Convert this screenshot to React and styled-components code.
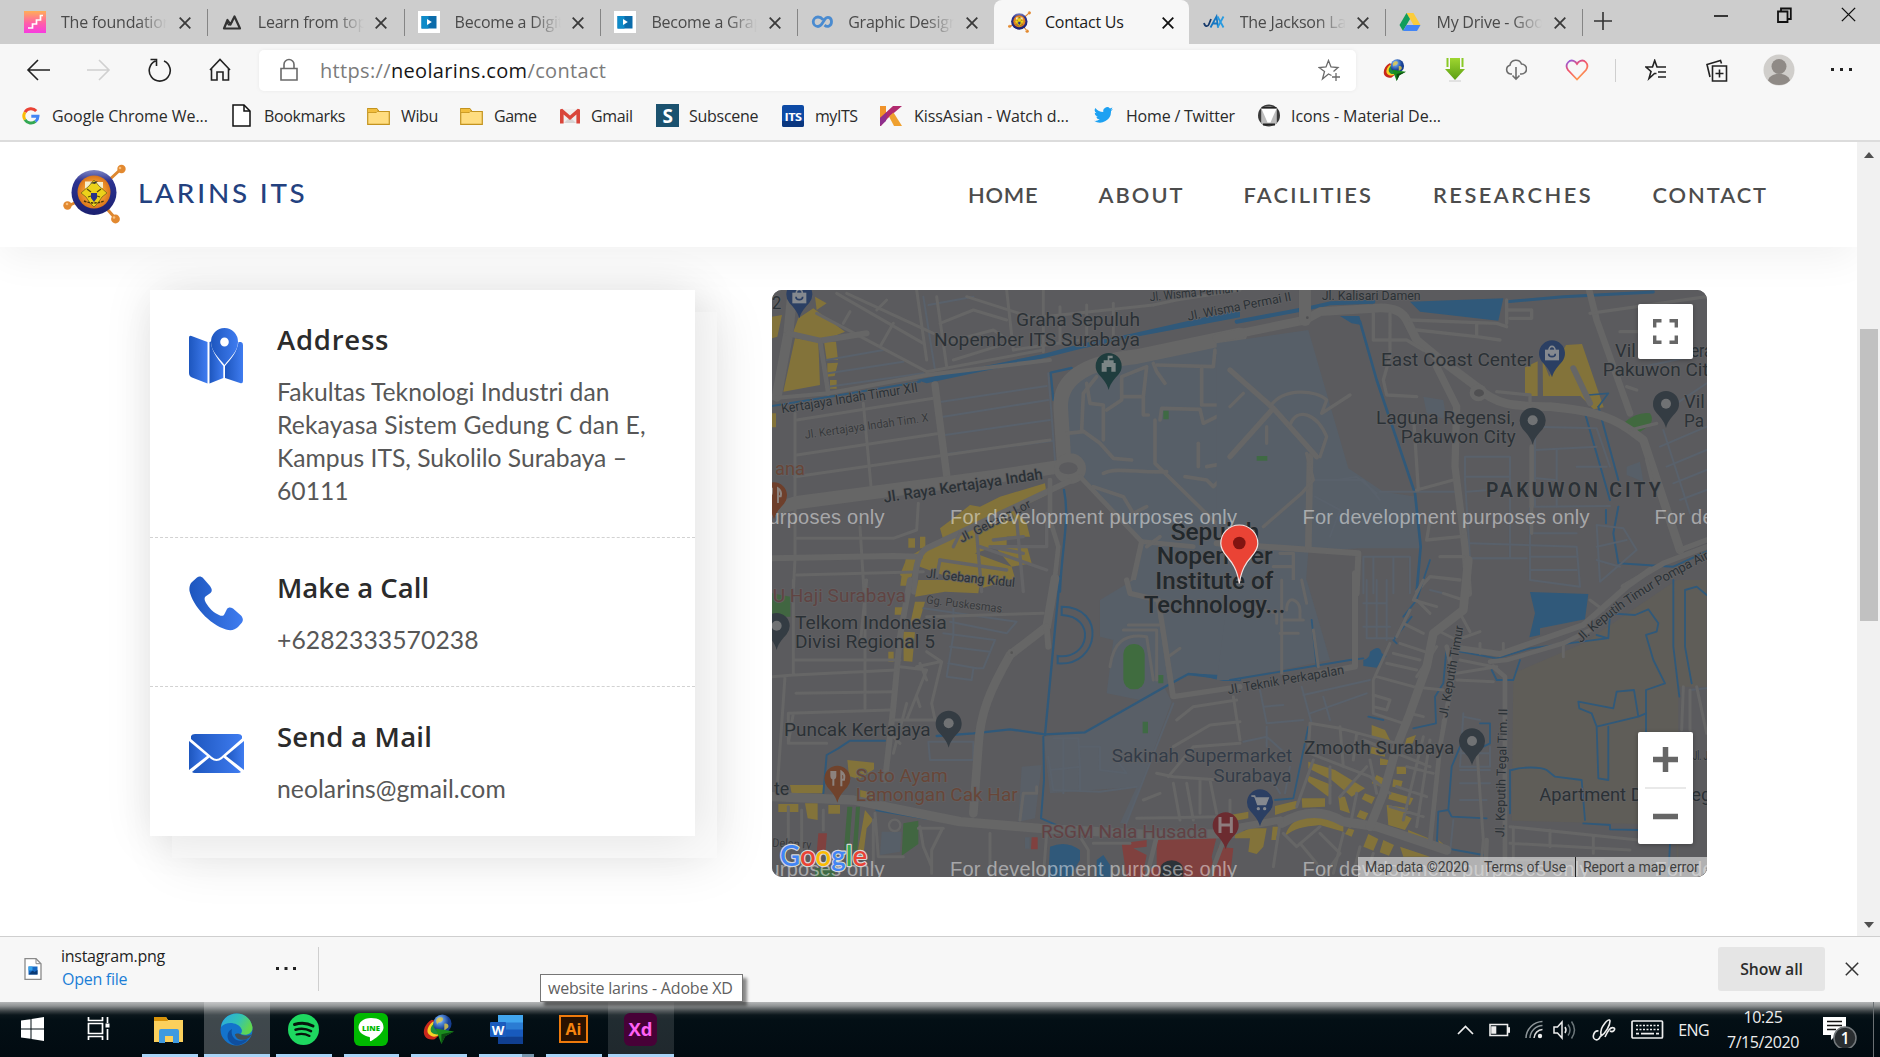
import React from 'react';
import styled, { createGlobalStyle } from 'styled-components';

const GlobalStyle = createGlobalStyle`
  * { box-sizing: border-box; }
  body { margin: 0; overflow: hidden; background: #fff; }
  svg { display: block; }
`;

const UI = '"Open Sans", "Noto Sans", sans-serif';
const SITE = 'Lato, "Open Sans", sans-serif';

/* ---------- window shell ---------- */

const Screen = styled.div`
  width: 1880px;
  height: 1057px;
  display: flex;
  flex-direction: column;
  font-family: ${UI};
  overflow: hidden;
`;

const TabStrip = styled.div`
  height: 44px;
  flex: none;
  display: flex;
  background: #cdcdcd;
  padding-left: 10px;
`;

const Tab = styled.div`
  width: ${(p) => (p.$active ? 194.7 : 196.8)}px;
  flex: none;
  height: 44px;
  display: flex;
  align-items: center;
  padding-left: 14px;
  border-radius: 8px 8px 0 0;
  background: ${(p) => (p.$active ? '#f7f7f7' : 'transparent')};
  position: relative;
  &::after {
    content: '';
    display: ${(p) => (p.$line ? 'block' : 'none')};
    position: absolute;
    right: -1px;
    top: 9px;
    width: 1px;
    height: 27px;
    background: #858585;
  }
`;

const TabIcon = styled.span`
  width: 37px;
  flex: none;
`;

const TabTitle = styled.span`
  width: 106px;
  flex: none;
  overflow: hidden;
  white-space: nowrap;
  font-size: 16px;
  letter-spacing: -0.22px;
  line-height: 24px;
  color: ${(p) => (p.$active ? '#1b1b1b' : '#4a4a4a')};
  mask-image: ${(p) => (p.$active ? 'none' : 'linear-gradient(90deg, #000 72%, transparent 100%)')};
`;

const TabClose = styled.span`
  width: 14px;
  margin-left: 11.5px;
  padding-top: 2px;
`;

const NewTab = styled.span`
  padding: 12px 0 0 12px;
`;

const WindowButtons = styled.div`
  margin-left: auto;
  display: flex;
  align-items: flex-start;
  gap: 49px;
  padding: 7px 24px 0 0;
`;

const Toolbar = styled.div`
  height: 51px;
  flex: none;
  display: flex;
  align-items: center;
  background: #f7f7f7;
  padding: 1px 0 0 26px;
`;

const NavButtons = styled.div`
  width: 233px;
  display: flex;
  align-items: center;
  gap: 36.5px;
`;

const AddressBar = styled.div`
  width: 1097px;
  height: 41px;
  flex: none;
  display: flex;
  align-items: center;
  background: #fff;
  border-radius: 5px;
  box-shadow: 0 0 4px rgba(0, 0, 0, 0.06);
  padding: 0 15px 0 20px;
`;

const Url = styled.span`
  margin-left: 21px;
  flex: 1;
  font-size: 20px;
  letter-spacing: 0.34px;
  line-height: 30px;
  padding-top: 1px;
  color: #7b7b7b;
  b { font-weight: 400; color: #161616; }
`;

const Extensions = styled.div`
  display: flex;
  align-items: center;
  margin-left: 27px;
`;

const Slot = styled.span`
  width: ${(p) => p.$w}px;
`;

const Rule = styled.span`
  width: 1px;
  height: 23px;
  margin-right: 29px;
  background: #cfcfcf;
`;

const Bookmarks = styled.div`
  height: 47px;
  flex: none;
  display: flex;
  align-items: flex-start;
  background: #f7f7f7;
  border-bottom: 2px solid #dcdcdc;
  padding: 8px 0 0 22px;
`;

const Bookmark = styled.div`
  width: ${(p) => p.$w}px;
  height: 25px;
  display: flex;
  align-items: center;
  white-space: nowrap;
  font-size: 16px;
  letter-spacing: ${(p) => p.$ls}px;
  color: #2a2a2a;
`;

const BookmarkIcon = styled.span`
  width: ${(p) => p.$w}px;
  flex: none;
`;

/* ---------- site ---------- */

const Viewport = styled.div`
  height: 794px;
  flex: none;
  display: flex;
  background: #fff;
`;

const Page = styled.div`
  flex: 1;
  display: flex;
  flex-direction: column;
  overflow: hidden;
  font-family: ${SITE};
`;

const SiteHeader = styled.header`
  height: 105px;
  flex: none;
  display: flex;
  align-items: center;
  padding: 0 84px 2px 63px;
  background: #fff;
  box-shadow: 0 10px 42px rgba(0, 0, 0, 0.06);
`;

const Brand = styled.div`
  display: flex;
  align-items: center;
  gap: 12px;
  font-size: 27.8px;
  font-weight: 500;
  line-height: 40px;
  letter-spacing: 2.8px;
  color: #23417f;
`;

const BrandName = styled.span`
  padding-bottom: 2px;
`;

const SiteNav = styled.nav`
  margin-left: auto;
  display: flex;
`;

const NavLink = styled.a`
  width: ${(p) => p.$w}px;
  font-size: 21.8px;
  font-weight: 600;
  line-height: 40px;
  padding-top: 2px;
  letter-spacing: ${(p) => p.$ls}px;
  color: #4c4c4c;
`;

const Content = styled.main`
  flex: 1;
  display: flex;
  gap: 77px;
  padding: 43px 0 0 150px;
`;

const Card = styled.section`
  width: 545px;
  height: 546px;
  flex: none;
  background: #fff;
  box-shadow: 0 0 44px rgba(0, 0, 0, 0.1), 22px 22px 0 #fafafa, 22px 22px 50px rgba(0, 0, 0, 0.11);
`;

const InfoRow = styled.div`
  height: ${(p) => p.$h}px;
  display: flex;
  padding: 30px 30px 0 39px;
  border-bottom: ${(p) => (p.$last ? 'none' : '1px dashed #d2d2d2')};
`;

const InfoIcon = styled.span`
  width: 88px;
  flex: none;
  padding-top: ${(p) => p.$top}px;
`;

const InfoTitle = styled.h3`
  margin: 0 0 15px;
  font: 600 27.5px/40px ${UI};
  letter-spacing: ${(p) => p.$ls}px;
  color: #2b2b2b;
`;

const InfoText = styled.p`
  margin: 0;
  font-size: 24.7px;
  line-height: 33px;
  letter-spacing: ${(p) => p.$ls || 0}px;
  color: #575757;
  white-space: nowrap;
`;

const MapBox = styled.section`
  width: 935px;
  height: 587px;
  flex: none;
  position: relative;
  border-radius: 10px;
  overflow: hidden;
  background: #5d5d5f;
`;

const MapControl = styled.div`
  position: absolute;
  right: 14px;
  top: ${(p) => p.$top}px;
  width: 55px;
  display: flex;
  flex-direction: column;
  align-items: center;
  background: #fff;
  border-radius: 2px;
  box-shadow: 0 1px 4px rgba(0, 0, 0, 0.3);
`;

const ControlCell = styled.span`
  height: 55px;
  display: flex;
  align-items: center;
`;

const ControlLine = styled.i`
  width: 41px;
  height: 2px;
  background: #e9e9e9;
`;

const Attribution = styled.div`
  position: absolute;
  right: 0;
  bottom: 0;
  height: 20px;
  display: flex;
  font: 14px/20px Roboto, sans-serif;
  color: #404040;
  background: rgba(226, 226, 226, 0.64);
  white-space: nowrap;
`;

const Credit = styled.span`
  width: ${(p) => p.$w}px;
  padding-left: 7px;
  letter-spacing: -0.06px;
  border-left: ${(p) => (p.$line ? '1px solid #222' : 'none')};
`;

const Scrollbar = styled.div`
  width: 23px;
  background: #f1f1f1;
  display: flex;
  flex-direction: column;
  align-items: center;
  justify-content: space-between;
  padding: 10px 0 8px;
`;

const Thumb = styled.div`
  width: 18px;
  height: 292px;
  margin-bottom: 130px;
  background: #c1c1c1;
`;

/* ---------- download shelf ---------- */

const Shelf = styled.div`
  height: 66px;
  flex: none;
  display: flex;
  align-items: center;
  background: #f7f7f7;
  border-top: 1px solid #cfcfcf;
  padding: 0 21px 2px 24px;
`;

const Download = styled.div`
  width: 295px;
  height: 44px;
  display: flex;
  align-items: center;
  border-right: 1px solid #cfcfcf;
`;

const FileText = styled.div`
  margin-left: 19px;
  width: 215px;
  font-size: 16px;
  line-height: 23px;
  letter-spacing: -0.28px;
  color: #1f1f1f;
  padding-bottom: 2px;
  a { display: block; color: #1b7ed6; padding-left: 1px; }
`;

const ShowAll = styled.button`
  margin: 0 20px 0 auto;
  width: 107px;
  height: 44px;
  border: 0;
  border-radius: 3px;
  background: #e5e5e5;
  font: 600 15.8px ${UI};
  letter-spacing: -0.1px;
  color: #2c2c2c;
`;

/* ---------- taskbar ---------- */

const Taskbar = styled.footer`
  height: 55px;
  flex: none;
  display: flex;
  position: relative;
  background: linear-gradient(180deg, #b4b6b7 0, #8f9293 4px, #3c4346 9px, #0b161b 13px, #030f15 18px, #020b11 100%);
  padding-left: 4px;
`;

const TaskButton = styled.div`
  width: ${(p) => p.$w}px;
  height: 55px;
  display: flex;
  justify-content: center;
  align-items: center;
  padding-bottom: 1px;
  position: relative;
  background: ${(p) => (p.$hot ? `rgba(255,255,255,${p.$hot})` : 'transparent')};
  &::after {
    content: '';
    position: absolute;
    bottom: 0;
    height: 3px;
    left: ${(p) => (p.$hot ? 0 : 6)}px;
    right: ${(p) => (p.$hot ? 0 : 6)}px;
    background: ${(p) => (p.$open === 'two' ? 'linear-gradient(90deg, #a9d4f7 78%, #7695ac 78%)' : p.$open ? '#a9d4f7' : 'transparent')};
  }
`;

const Tip = styled.div`
  position: absolute;
  left: 540px;
  top: -28px;
  width: 203px;
  height: 28px;
  background: #fff;
  border: 1px solid #767676;
  box-shadow: 4px 4px 3px rgba(0, 0, 0, 0.45);
  font-size: 16px;
  line-height: 26px;
  letter-spacing: -0.19px;
  text-indent: 7px;
  white-space: nowrap;
  color: #5f5f5f;
`;

const Tray = styled.div`
  margin-left: auto;
  display: flex;
  align-items: center;
  color: #eee;
  font-size: 16px;
  letter-spacing: -0.6px;
`;

const TrayIcon = styled.span`
  width: ${(p) => p.$w}px;
`;

const Clock = styled.div`
  width: 74px;
  margin: 0 23px 0 17px;
  text-align: center;
  line-height: 25px;
  letter-spacing: -0.4px;
`;

const ShowDesktop = styled.i`
  align-self: stretch;
  width: 7px;
  margin-left: 16px;
  border-left: 1px solid #6a7073;
`;

/* ---------- glyphs ---------- */

const Close = ({ s = 12, c = '#333', w = 1.8 }) => (
  <svg width={s} height={s} viewBox="0 0 12 12" stroke={c} strokeWidth={w} fill="none"><path d="M.7 .7L11.3 11.3M11.3 .7L.7 11.3" /></svg>
);
const Dots = ({ w = 21, s = 3 }) => (
  <svg width={w} height="4" fill="#222"><rect width={s} height={s} x="0" /><rect width={s} height={s} x={(w - s) / 2} /><rect width={s} height={s} x={w - s} /></svg>
);

const Fav = {
  steps: (
    <svg width="22" height="22"><defs><linearGradient id="st" x2="0" y2="1"><stop stopColor="#ffae57" /><stop offset=".55" stopColor="#ff5fa8" /><stop offset="1" stopColor="#f73be0" /></linearGradient></defs>
      <rect width="22" height="22" fill="url(#st)" /><path d="M4 17h4.500v-4h4v-4h4V4.500h2.500" fill="none" stroke="#fff" strokeWidth="1.700" /></svg>
  ),
  peak: <svg width="22" height="22" fill="none" stroke="#333" strokeWidth="2.200"><path d="M3 17.500L6.500 9l3 4.500L13.500 5.500 19 17.500z" strokeLinejoin="round" /><path d="M6 12l2 2 3-3" strokeWidth="1.500" /></svg>,
  play: <svg width="22" height="22"><rect width="22" height="22" fill="#fff" /><rect x="3.500" y="5" width="15" height="12.500" fill="#0b6cab" /><path d="M3.500 5h7v12.500h-7z" fill="#0e8bc9" /><path d="M9 8v6l4.800-3z" fill="#fff" /></svg>,
  loop: <svg width="22" height="22" fill="none" stroke="#4a8bd0" strokeWidth="2.800"><path d="M12 8.700C10.500 6.800 9 6 7 6a4.700 4.700 0 100 9.500c4 0 4.500-4.500 7-7.500 2.500-3 6.500-1.500 6.500 2.700s-4 6-7 3.500" /></svg>,
  jax: <svg width="22" height="22" fill="none" stroke="#1576c2" strokeWidth="1.800"><path d="M1 12c1 4 4 4 5 1L8 8" stroke="#173a6b" /><path d="M7.500 16.500L13.500 5.500l1.500 11M10 12.500h5" /><path d="M14.500 5.500l6 11M20.500 5.500l-6 11" stroke="#2a9be0" /></svg>,
  drive: <svg width="22" height="22"><path d="M7.500 2h7l7 12h-7z" fill="#fbcc3c" /><path d="M7.500 2L.5 14l3.500 6L11 8z" fill="#119d5b" /><path d="M7.500 14h14L18 20H4z" fill="#4385f5" /></svg>,
};

const Emblem = ({ w, h }) => (
  <svg width={w} height={h} viewBox="0 0 63 60">
    <defs>
      <radialGradient id="em"><stop offset=".6" stopColor="#f39a2f" /><stop offset="1" stopColor="#d9741b" /></radialGradient>
      <linearGradient id="er" x2="0" y2="1"><stop stopColor="#7f86c4" /><stop offset=".25" stopColor="#2c3290" /><stop offset="1" stopColor="#1b2070" /></linearGradient>
    </defs>
    <g stroke="#dd8730" strokeWidth="3"><path d="M31 30L58 5M31 30L5 42M31 30L52 54" /></g>
    <circle cx="31" cy="28.500" r="22.500" fill="url(#er)" />
    <circle cx="31" cy="28" r="16.500" fill="url(#em)" />
    <path d="M22 17.500h7v7h-7zM33 18h7v6h-7z" fill="#f7eecb" />
    <path d="M31 16l5 6 8 7-5 4-4 6-4 4-4-4-4-6-5-4 8-7z" fill="#ecd21a" stroke="#7a6a14" strokeWidth=".8" />
    <path d="M27 19l8-2-3 3z" fill="#3a3a30" />
    <path d="M28 29h6v5l-3 4-3-4z" fill="#27318a" />
    <path d="M24 25l4 3M38 25l-4 3M25 33l3-1M37 33l-3-1" stroke="#57490c" strokeWidth="1.300" />
    <path d="M21 37q10 4 20 0" fill="none" stroke="#47360c" strokeWidth="1.500" strokeDasharray="2.500 1" />
    <g fill="#e28930"><circle cx="58.500" cy="5" r="4.200" /><circle cx="4.500" cy="41.500" r="4.200" /><circle cx="52.500" cy="55" r="4.400" /></g>
    <g fill="#f8bf7c"><circle cx="57" cy="4" r="1.300" /><circle cx="4" cy="40" r="1.300" /><circle cx="51" cy="53.500" r="1.300" /></g>
  </svg>
);

const Folder = () => <svg width="23" height="18"><path d="M.7 1.500h9l2 3h10.600v12.800H.7z" fill="#ffdd80" stroke="#c3931f" strokeWidth="1.200" /><path d="M1 5.500h8l3-2.500" fill="none" stroke="#c3931f" /><path d="M1.200 2h8l1.300 2-2 1.300H1.200z" fill="#f2be3c" /></svg>;

const BI = {
  google: <svg width="18" height="18" viewBox="0 0 18 18" fill="none" strokeWidth="3"><path d="M14.200 4A7 7 0 003 5.200" stroke="#ea4335" /><path d="M3 5.200a7 7 0 000 7.600" stroke="#fbbc05" /><path d="M3 12.800a7 7 0 0010.500 1.600" stroke="#34a853" /><path d="M13.500 14.400A7 7 0 0016 9.200H9.300" stroke="#4285f4" /></svg>,
  doc: <svg width="19" height="23" fill="#fff" stroke="#111" strokeWidth="1.500"><path d="M1 1h11l6 6v15H1z" /><path d="M12 1v6h6" fill="none" /></svg>,
  folder: <Folder />,
  gmail: <svg width="20" height="16"><path d="M1 1h18v14H1z" fill="#f0eeee" /><path d="M4 15l6-6 6 6z" fill="#d8d4d4" /><path d="M0 1.500V15.500h3.600V6.500L10 12l6.400-5.500v9H20V1.500L17.800.8 10 7.400 2.200.8z" fill="#d9453a" /></svg>,
  sub: <svg width="23" height="23"><rect width="23" height="23" fill="#1b526f" /><text x="11.500" y="18.500" textAnchor="middle" fontFamily="Open Sans, sans-serif" fontWeight="700" fontSize="19" fill="#fff">S</text></svg>,
  its: <svg width="22" height="22"><rect width="22" height="22" rx="2" fill="#0d4aa5" /><path d="M0 16h22v4a2 2 0 01-2 2H2a2 2 0 01-2-2z" fill="#0a377f" /><text x="11" y="15.500" textLength="17" lengthAdjust="spacingAndGlyphs" textAnchor="middle" fontFamily="Open Sans, sans-serif" fontWeight="700" fontSize="11" fill="#fff">ITS</text></svg>,
  kiss: <svg width="22" height="20"><path d="M0 0h6v8L0 13z" fill="#f0932b" /><path d="M13 0h9L8 12 1 20H0v-8z" fill="#b12a6f" /><path d="M9 10.500l4.500-4L22 20h-8z" fill="#efa02f" /><path d="M0 12l7-6-1 9-6 5z" fill="#8e2f8d" /></svg>,
  bird: <svg width="19" height="17" viewBox="0 3 24 19.500" fill="#1da1f2"><path d="M24 4.600a10 10 0 01-2.800.8 5 5 0 002.100-2.700 10 10 0 01-3.100 1.200 4.900 4.900 0 00-8.400 4.500A14 14 0 011.700 3.200a4.900 4.900 0 001.500 6.600 4.900 4.900 0 01-2.200-.6 4.900 4.900 0 003.900 4.900 5 5 0 01-2.200.1 4.900 4.900 0 004.600 3.400A9.900 9.900 0 010 19.500 14 14 0 0021.500 7.100 10 10 0 0024 4.600z" /></svg>,
  mat: <svg width="22" height="23"><circle cx="11" cy="11.500" r="11" fill="#3a3a3a" /><path d="M3.200 3.800Q11 1 18.800 3.800V19.500Q11 23 3.200 19.500z" fill="#bcbcbc" /><path d="M3.500 3h15v1.800h-15z" fill="#222" /><path d="M3.500 4.800h15L12.500 18.500h-3z" fill="#fff" /><path d="M5 19.500h12v2H5z" fill="#222" /></svg>,
};

const Globe = ({ w, h }) => (
  <svg width={w} height={h} viewBox="0 0 32 31">
    <defs><radialGradient id="gl" cx=".35" cy=".3"><stop stopColor="#e6f3ff" /><stop offset=".4" stopColor="#5a92dd" /><stop offset="1" stopColor="#173f92" /></radialGradient></defs>
    <path d="M9 6C2 10-1 18 2 23c2 3 6 4 10 3l7-6C12 21 8 16 12 7z" fill="#c9281c" />
    <path d="M10 8C5 12 3 18 6 21c3 3 7 3 10 1l2-5c-6 2-8-3-5-9z" fill="#f5d327" />
    <path d="M11 10c-4 4-4 8-1 10s7 1 8 0l1-5z" fill="#1d8f3a" />
    <circle cx="20" cy="10" r="9.500" fill="url(#gl)" />
    <path d="M16 4c4-2 6 1 4 3s-5 1-5 4c-2-3-2-5 1-7zM22 10c3-1 5 1 4 4l-4 3z" fill="#d9c447" opacity=".85" />
    <path d="M13 15l19 3-9 5-4 8z" fill="#1a8d1d" /><path d="M19 31l4-8 9-5-13 3z" fill="#0d4d12" />
  </svg>
);

/* ---------- map ---------- */

const Label = ({ x, y, w, s = 55, r = 0, fill = '#2b3136', weight = 400, children }) => (
  <text x={x} y={y} fontFamily="Roboto, sans-serif" fontSize={s} fontWeight={weight} fill={fill} textLength={w}
    lengthAdjust="spacingAndGlyphs" transform={r ? `rotate(${r} ${x} ${y})` : undefined}
    stroke="#616163" strokeWidth="5" paintOrder="stroke" strokeLinejoin="round">{children}</text>
);
const Pin = ({ x, y, c = '#343c43', children }) => (
  <g transform={`translate(${x} ${y})`}>
    <path d="M0 73C-6 50-20 38-30 26A39 39 0 1130 26C20 38 6 50 0 73z" fill={c} />
    {children || <circle r="15" fill="#707274" />}
  </g>
);
const Bag = () => <g><rect x="-21" y="-10" width="42" height="32" fill="#85898f" /><path d="M-9-9a9 11 0 0118 0" fill="none" stroke="#85898f" strokeWidth="5" /><path d="M-10 2a10 9 0 0020 0" fill="none" stroke="#2b3f63" strokeWidth="5" /></g>;
const Fork = () => <g fill="none" stroke="#8c827d" strokeWidth="6"><path d="M-18-22v14q0 8 6 8t6-8v-14M-12-22v44M12 24V-20q12 8 8 24H12" /></g>;

const R = ({ d, w = 9, c = '#666666' }) => <path d={d} fill="none" stroke={c} strokeWidth={w} strokeLinejoin="round" strokeLinecap="round" />;
const BL = '#59616b';
const WT = '#30597a';
const YL = '#83733a';
const UN = '#575f68';

const MapArt = () => (
  <svg width="935" height="587" viewBox="772 290 935 587">
    <rect x="772" y="290" width="935" height="587" fill="#5b5b5e" />

    <g transform="translate(760 280) scale(.33333)">
      <path d="M925 290L1150 215 1440 160V935H1120L1150 790 970 590 920 500z" fill={UN} />
      <path d="M165 50l35 20-30 20zM160 85l95 70-75 30-80-30 15-40zM105 175l70 10 5 130-110 20zM192 185h36l6 55h-34zM202 250l32-2-10 40-22 2zM210 300h20v26h-20zM36 110l30-5-14 65-16 5zM36 400h12v42h-12z" fill={YL} />
      <path d="M855 610l5 35-95 45 35 40 10 40h-70v25l60 0 15 55-60 10-50-60-60 20 110 40 10 35-100 30-60-20-140-50-15 50-30-20 20-50 50-30 60-25-10-35 40-30 50-40 30 5 60-30z" fill={YL} />
      <path d="M445 775h20v28h-20zM480 770h16v35h-16zM437 835h30l-8 35h-24zM425 885h28l-8 32h-24z" fill={YL} />
      <g>
        {['M200 240L370 210', 'M205 280L430 245', 'M205 320L490 280', 'M545 365L860 318', 'M550 410L865 360', 'M555 465L870 420', 'M560 522L880 482', 'M490 50L525 270', 'M505 75L640 50', 'M865 280L885 540'].map((d) => <R key={d} d={d} w={6} c={BL} />)}
        <R d="M36 378L200 352 480 305" w={6} c={WT} />
        <path d="M470 300L850 222 960 192 1110 162 1440 88V112L1120 172 960 207 850 235 500 310z" fill={WT} />
        <R d="M935 264L872 278 880 360" w={7} c={WT} /><R d="M912 630C930 720 905 800 900 935" w={7} c={WT} />
      </g>
      {['M170 100L500 275 850 210', 'M110 420L520 355', 'M110 525L540 460', 'M105 590L870 480', 'M310 370L335 640', 'M105 400V835L100 935', 'M300 740L312 935', 'M475 670L470 750 400 775 110 775', 'M110 885L490 875', 'M260 40L520 160', 'M230 40L490 190', 'M470 30L500 240', 'M530 50L560 260', 'M400 130L360 200', 'M270 95L250 130', 'M380 60L350 90', 'M540 130L640 90 740 120', 'M550 190L700 150 760 190', 'M620 50L840 120', 'M740 30L760 210', 'M850 30V215', 'M850 110L1180 75', 'M900 80V190', 'M980 75V180', 'M1060 70V165', 'M1180 75L1250 60 1440 30', 'M760 210L960 180', 'M580 240L740 190'].map((d) => <R key={d} d={d} w={9} />)}
      <R d="M36 835L400 828 480 830" w={18} /><R d="M95 60L85 160 50 350" w={30} /><R d="M85 160L180 182 320 160" w={18} /><R d="M180 182L205 340" w={14} /><R d="M36 355L205 340 500 285 870 240" w={12} />
      <R d="M525 315L562 600" w={22} />
      <R d="M36 690L110 668 700 590 900 560" w={40} />
      <R d="M1440 165L1130 230C990 245 900 290 902 380L912 545" w={44} />
      <path d="M930 520a48 46 0 100 92 48 46 0 100-92z" fill="#666" /><ellipse cx="925" cy="565" rx="28" ry="18" fill="#5b5b5e" />
      <R d="M960 590L1145 785 1300 800" w={14} /><R d="M1145 785L1112 935" w={16} /><R d="M925 605L820 655 500 805C470 820 465 880 462 935" w={18} />
      <R d="M870 600V720L895 800 880 935" w={14} />
      {['M650 760L665 935', 'M770 720L790 935', 'M540 840L740 870', 'M540 840L530 890', 'M690 800L790 820', 'M580 800L600 760', 'M860 700V800H700', 'M660 800L860 870', 'M700 780L790 770'].map((d) => <R key={d} d={d} w={10} c="#646466" />)}
      {['M1010 290L970 340 965 450 1020 490 1060 535 1115 540', 'M980 310L990 370 1030 375 1030 480', 'M1040 390L1085 360V290L1160 260 1150 350 1085 350', 'M1150 350V405H1165', 'M1180 250L1190 275 1215 310', 'M1190 255L1360 260 1365 210 1440 285', 'M1325 265L1325 375H1440', 'M1200 420L1205 385 1320 388 1330 430 1410 390', 'M1185 420V550L1440 800', 'M1415 400L1425 545 1340 560', 'M1315 490V560', 'M1275 590L1340 600 1360 620 1440 540', 'M1030 580C1070 560 1140 580 1220 575', 'M1000 620L1090 650 1120 700 1160 680', 'M920 460L970 455', 'M1380 390L1440 340', 'M1200 770L1160 800'].map((d) => <R key={d} d={d} w={11} />)}
      <path d="M1210 392h16v26h-16z" fill="#3f6a44" />
    </g>

    <g transform="translate(1230 280) scale(.33333)">
      <path d="M-40 190L235 150 355 565 460 635 560 650 570 805H385L235 815 225 940H-40z" fill={UN} />
      <path d="M885 262l38-18V348h-38zM938 240l20 50 50-95 48-3 65 190-30 6-40-40-112 0z" fill={YL} />
      <path d="M1180 430q40-35 80-30 20 30-30 55z" fill="#41693f" /><path d="M80 528h32v14h-32z" fill="#3f6a44" />
      <R d="M20 125L220 88 300 70 430 65" w={12} c={WT} />
      <path d="M540 65L820 55 805 122 570 95z" fill={WT} /><R d="M830 65L1000 50 1270 36" w={9} c={WT} />
      <path d="M330 108H388L395 135 365 130z" fill={WT} />
      <R d="M390 125L440 300 555 640 572 800 560 935" w={8} c={WT} /><R d="M1065 400L1140 660" w={6} c={WT} /><R d="M1105 380L1165 600" w={6} c={WT} /><R d="M1075 345L1135 340 1105 380" w={5} c={WT} />
      <R d="M1128 690V730M1165 680L1150 760 1165 850 1330 860 1440 810" w={6} c={WT} />
      {['M705 530H840V835H720L705 600z', 'M705 590H840', 'M710 635L780 630', 'M915 510L1100 500', 'M915 450V680M980 510V680', 'M920 595L975 600', 'M1040 560H1130', 'M915 680L1140 678', 'M700 835H890', 'M720 790L1040 800 1050 920 900 900V680', 'M900 760H1040M900 830H1040M900 870H1040', 'M1290 500L1430 440M1310 560L1430 510M1330 610L1430 570M1350 660L1430 630M1300 450L1380 700', 'M1100 735L1180 745 1220 810 1110 905z', 'M1100 800L1190 780', 'M250 600H400L450 660M320 600L380 590 440 640', 'M255 650L330 690 300 770M450 635H680', 'M400 830V940M430 830V940M490 830V940M540 830V940M400 830H540', 'M1340 370L1430 310M1240 260L1430 220', 'M910 440L1100 445 1140 560', 'M1100 840L1170 860'].map((d) => <R key={d} d={d} w={6} c={BL} />)}
      <path d="M580 350l60 10 10 60-60-20zM1190 560l40-15 10 60-50-20z" fill={UN} />
      <R d="M-40 175L225 120 270 95 430 85C480 80 515 90 530 120L560 180 620 230 740 320C800 380 860 378 960 380 1060 390 1130 400 1200 450L1240 480 1350 810" w={26} />
      <R d="M225 20V120" w={36} /><R d="M620 260L680 380 675 560 705 800 715 940" w={22} /><R d="M1075 20L1100 120 1200 400" w={20} /><R d="M1350 810L1430 780M1180 920L1300 850 1430 800" w={16} /><R d="M-40 790L250 810 385 820 380 940" w={18} /><R d="M240 530L235 800" w={20} /><R d="M0 270L130 385 260 530M130 385L0 530" w={16} /><R d="M905 500V680" w={14} /><R d="M905 760V680" w={10} />
      {['M430 100V180H530L580 210M480 100V230L460 300 470 345 560 350M560 150L740 170 810 180M540 120L800 130 830 140M740 130V170M830 60V130M830 90H905V115H840M800 335L900 345 900 370', 'M0 380L40 340M120 380C160 320 260 330 290 360L275 400 360 345M180 435C200 380 260 400 290 470L270 530M110 440V490M230 520L250 600 215 640 100 740', 'M550 400L565 630M560 630L670 600M600 720L590 780 690 770M630 830H700M560 935L600 890 690 900M150 820H190V935M130 860H190M1250 540L1270 620', 'M1080 100L1430 50M1170 155H1230M1190 320L1220 330M1200 450L1280 430M700 700V760'].map((d) => <R key={d} d={d} w={10} />)}
      <circle cx="745" cy="338" r="26" fill="#666" /><ellipse cx="747" cy="339" rx="15" ry="11" fill="#505052" /><R d="M1030 265L1080 370" w={18} /><circle cx="232" cy="113" r="4" fill="#505052" />
    </g>

    <g transform="translate(760 580) scale(.33333)">
      <path d="M1020 170L1020 60 1120 0H1440V300L1290 280 1240 305 1140 360 1040 340 1060 180z" fill={UN} />
      <path d="M850 470L970 455 1215 325 1235 365 1100 730H1080L1130 620 870 640zM785 560l60-5-20 160-50 10z" fill="#595f67" />
      <path d="M425 0h20l-5 15h-15zM475 0H660l-5 40-100-5-90 15zM405 82h25l-4 22h-22zM465 65h30l-20 70-25 0zM430 155l35 2-8 88-26-2zM385 215h16v30h-16zM262 540l80 8v20l-45 30-30-10zM90 615h100v25H95zM55 672h60v24H55zM135 670h38v50l-30-5zM205 675h35v26h-35zM300 630l45 10v15h-45zM315 690l25 30-20 25-8 65h-18z" fill={YL} />
      <path d="M36 40l55 10V110H36zM262 680h15l-10 130h-15zM288 680h12l-8 130h-14zM430 730l45-8v70l-50 35z" fill="#416641" /><rect x="1090" y="192" width="64" height="136" rx="30" fill="#406c3f" /><path d="M1195 285h15v25h-15zM1148 425h16v35h-16zM165 865h60v25h-60z" fill="#3f6a44" />
      <path d="M175 760h26l-5 60h-26zM815 772h18v36h-20zM1085 790l75-10v20l-40 5 40 20-10 50 -50 20zM1190 780l180-10-15 60 10 60H1100l90-30zM1375 800l45 5-10 85h-50z" fill="#80413f" />
      <path d="M365 755h60l-5 60-60 10zM795 772h14v34h-14z" fill={UN} />
      <path d="M870 800q50-20 90 10v30l-30 50h-65zM1010 840l20-15 20 30v35h-40z" fill={WT} />
      <R d="M900-10L880 200 855 465" w={7} c={WT} /><path d="M905 80C1040 80 1020 260 893 250L893 228C990 240 1010 110 905 105z" fill="none" stroke={WT} strokeWidth="6" />
      <R d="M530 468L640 460 750 448 855 463 975 457 1215 320 1285 282 1440 300" w={7} c={WT} /><path d="M1290 280l90 5 60 18-50 0z" fill={WT} />
      <R d="M375 482H270L235 505 200 525 190 640" w={6} c={WT} /><R d="M850 470L852 600 843 715 900 740" w={6} c={WT} /><R d="M350 690L500 715" w={8} c={WT} />
      {['M490 85L770 125 740 160 570 125', 'M580 85V165L560 290 635 300 640 265H670L705 180 550 160', 'M570 200L690 215M565 250L650 265', 'M505 485H640V540H510z', 'M880 475H955L960 560 870 570M865 530L880 630 1020 635 1130 620M960 500H1020V570L1100 580 1070 540 1130 530M910 475V640M960 560V630', 'M1240 370L1095 740'].map((d) => <R key={d} d={d} w={6} c={BL} />)}
      <R d="M885-5L860 140 750 225C690 330 660 400 655 500L640 700" w={26} /><R d="M860 140L865 200M450 0L420 170 400 380 375 600" w={18} />
      <R d="M36 650L280 660 400 685 600 725 840 745 1190 765 1440 760" w={28} />
      {['M100 0V285M36 290L100 285 410 270M105 240H420M315 0V385M108 340L400 335M85 490V400L390 390M85 490L200 490M75 290L50 650M100 400L85 490M400 420H520M440 370L400 520M470 260L540 245M500 215L545 245 515 370 525 420M480 250L500 300M420 260L500 270 440 420M480 380L470 350M400 470L420 490', 'M85 680V860M125 690V860M190 690V750M345 700L355 830 430 830M480 740L490 800 515 860M545 750L515 810V880M690 760V890M550 745H475M340 720V860', 'M1050 260C1060 190 1090 160 1160 170L1180 300M1090 150H1190V300M1200 110L1235 350M1105 135H1200M1225 230L1260 205M1390 190V280', 'M1250 420L1300 380 1430 360M1240 500L1350 435 1440 425M1225 590L1300 500 1440 490M1190 580L1240 590 1380 600M1240 610L1260 720M1280 610L1300 720M1320 600V700M1350 600L1370 700M1150 660L1200 640M1130 715L1380 710M1410 660V740', 'M780 720L790 640H830V620M860 760L850 890M1110 790L1000 790M960 770L985 810V880M300 200L320 0M500 110L850 100'].map((d) => <R key={d} d={d} w={9} />)}
      <R d="M1100 0L1110 40 1195 60 1240 350 1440 320" w={16} /><circle cx="755" cy="218" r="12" fill="#666" /><circle cx="755" cy="218" r="4" fill="#555" /><circle cx="404" cy="736" r="17" fill="#5b5b5e" stroke="#666" strokeWidth="7" />
      <R d="M1190 770L1160 890M1410 730L1350 890" w={14} />
      <path d="M1200 870a30 25 0 0170 0v20h-70z" fill="#2d3338" />
    </g>

    <g transform="translate(1230 580) scale(.33333)">
      <path d="M850 280L1060 190 1340 0H1430V930H1340V735L845 722z" fill="#5f5d58" />
      <path d="M0 0H230L300 240 0 300z" fill={UN} /><path d="M-40 300L0 0H30V300z" fill={UN} />
      <path d="M1345 320h85v570h-85z" fill="#5b5b5e" />
      <path d="M900 36L1075 42 1065 118 930 145V165L898 172 915 100zM400 240q20-5 20-25 30-25 35 5l15 8-20 20-10 15-40-5z" fill={WT} />
      {['M0 300L180 270 360 240 400 235', 'M545 110L490 180 500 190M600-60L560 60 520 110', 'M245 120L260 260', 'M690 215L800 235 900 205 1130 175M870 240L850 300 800 300 785 270', 'M650 200L640 310 615 350 618 430 550 445M415 410L460 420', 'M235 440L190 655 135 660', 'M690 500L665 560 655 690 625 695 620 800 760 825M655 690L665 710 770 715M750 430H780V490L760 500', 'M845 570C880 560 930 560 950 570L975 590 1055 600 1065 720', 'M1330 0V200L1348 350M1430 45L1400 20 1365 30V200L1385 310', 'M1100 165L1135 175 1140 100 1215 105 1255 88 1285 130 1280 155 1248 165 1270 240 1305 310 1248 330V470', 'M1045 365L1150 385 1160 335 1212 330 1225 410 1100 440 1105 595 1135 600V440M1045 365L1048 385 1085 400 1100 440M1225 410L1248 400', 'M1060 730L1140 735V748L1225 750M1320 790L1315 890M840 570V700'].map((d) => <R key={d} d={d} w={5.5} c={WT} />)}
      {['M410 0V175H490M440 0V170M400 70H470M470 0V180M400 140H480', 'M90 330L110 430 220 420M100 380L160 375M215 320L245 430M220 345L420 300M240 400L410 340M280 350L300 420M40 485L110 470 155 510M110 440V500', 'M700 400L690 560H780V500M700 410L750 420M690 520H780M690 570H780M690 610H780M690 660H770M660 820L670 720', 'M1380 330L1430 325', 'M120 590L150 640M180 560L165 640', 'M640 40L600 30'].map((d) => <R key={d} d={d} w={6} c={BL} />)}
      <path d="M425 435l40 15 20 40-60-20zM425 500l40 10v20l-45-10zM235 545l80 25 90 55-40 25-60-50-70-35zM230 585l75 30-10 35-60-45zM530 475l28-10-10 25-25 10zM450 535l25 5v15h-25zM500 560h28v22h-28zM490 598l28 5-5 20-26-3zM135 678L200 662V685L135 705zM215 655h70v25l-68 3zM325 650h20l15 50-30-10zM480 635l70 20-10 20-65-18zM470 675l65 10-10 20 20 10-20 35-50-15zM440 585l30 15-15 20-30-10zM405 640l30 12-10 20-30-15zM390 690l25 10-10 20-25-10zM415 762l30 15-15 35-30-12zM460 780l32 15-15 32-28-10zM510 800l90 30H520zM535 750l60 25v18l-65-18zM625 780l25 20-20-5zM0 705l55-10v20L0 725zM15 765L60 745H110L100 800 80 822 55 815 60 775H15zM128 740h18l-8 40h-14zM165 770C180 715 230 700 280 710L340 735V755L270 735C220 740 190 745 165 770zM355 745l18 5-8 20-20-8z" fill={YL} />
      {['M240 430L330 445 500 490M330 440L340 560M380 460L370 540M400 480L600 560M240 520L420 590 480 640M300 560V670M410 560L330 650M580 470L520 720M600 480L560 740M640 420L600 800M540 500L610 520M530 560L610 580M500 620L590 650M480 680L580 710M250 540L200 680M240 430L235 520M420 540L440 640M380 640L360 740', 'M510 190L600 220M540 90L500 170M560 60L600 100M580 0L550 60 620 80M520 130L580 160M480 190L430 300V400L520 430M440 290L550 320M430 345L480 360 470 390 430 380M470 250L560 270M490 220L570 240M550 320L640 330M560 290L620 200M540 400L580 410M620 150L680 180 750 155M690 100L720 155M640 40L700 60M680 280L800 260M690 240L790 260M680 300L790 305M750 190V220M820 190V220M1000 190V230M1080 60L1120 90', 'M150 730L130 860M160 760L200 800 270 740M210 790L260 850M270 760L330 820 280 890M340 760L310 880M390 800L370 880M430 820L410 880', 'M840 740L1225 780M840 790L1200 810M960 750V800M1090 770V820M830 840H1120M850 740V880M700 480L740 500 760 780 750 890M1360 320L1355 450M1400 320L1430 460M1380 330V450', 'M140 130V100L70 80M160 120H220M155 0V280M170 90C170 40 210 60 210 90V120M215 0L230 70M150 160H205M250 150L265 260M10 350L30 480'].map((d) => <R key={d} d={d} w={9} />)}
      <R d="M155 730C220 690 280 690 340 725L440 740 650 810" w={28} /><R d="M-20 750L150 720" w={22} />
      <R d="M715-60L700 90 610 160 590 260 540 400 500 500 460 640 420 740" w={26} />
      <R d="M375-20V260L265 280" w={18} /><R d="M690 205L810 222 1060 135 1190 20 1260-30" w={18} /><R d="M780 245L830 240 1000 190 1080 150" w={14} /><R d="M790 260L825 290V880M650 200L670 280 630 500 600 790M770 780L765 890" w={14} />
    </g>

    <g transform="translate(760 280) scale(.33333)">
      <Label x={36} y={88} w={28}>2</Label>
      <Label x={768} y={138} w={372}>Graha Sepuluh</Label>
      <Label x={522} y={197} w={618}>Nopember ITS Surabaya</Label>
      <Label x={1170} y={64} w={268} s={38} r={-6}>Jl. Wisma Permai I</Label>
      <Label x={1285} y={122} w={316} s={38} r={-11}>Jl. Wisma Permai II</Label>
      <Label x={66} y={400} w={414} s={40} r={-9}>Kertajaya Indah Timur XII</Label>
      <Label x={136} y={476} w={374} s={35} r={-8} fill="#37393c">Jl. Kertajaya Indah Tim. X</Label>
      <Label x={45} y={585} w={90} fill="#684638">ana</Label>
      <Label x={373} y={668} w={482} s={46} r={-8.500} weight={500}>Jl. Raya Kertajaya Indah</Label>
      <Label x={605} y={788} w={236} s={37} r={-27}>Jl. Gebang Lor</Label>
      <Label x={497} y={893} w={268} s={38} r={6}>Jl. Gebang Kidul</Label>
      <Label x={1232} y={780} w={266} s={70} weight={500} fill="#22282c">Sepuluh</Label>
      <Label x={1190} y={853} w={348} s={70} weight={500} fill="#22282c">Nopember</Label>
      <Label x={1186} y={927} w={354} s={70} weight={500} fill="#22282c">Institute of</Label>
      <Label x={1152} y={1000} w={424} s={70} weight={500} fill="#22282c">Technology...</Label>
      <Pin x={118} y={42} c="#2b3f63"><g transform="translate(0 6)"><Bag /></g></Pin>
      <Pin x={1046} y={257} c="#1f3d3e"><path d="M-21 18v-26h6v-8H-3v-14H12v8H2v6H15v8h6v26H8V4H-6v14z" fill="#7b8585" /></Pin>
      <Pin x={42} y={645} c="#6e3f2b"><Fork /></Pin>
    </g>
    <g transform="translate(1230 280) scale(.33333)">
      <Label x={275} y={60} w={297} s={37}>Jl. Kalisari Damen</Label>
      <Label x={453} y={259} w={457}>East Coast Center</Label>
      <Label x={438} y={432} w={416}>Laguna Regensi,</Label>
      <Label x={512} y={490} w={345}>Pakuwon City</Label>
      <Label x={1155} y={230} w={62}>Vil</Label><Label x={1382} y={230} w={66}>era</Label>
      <Label x={1118} y={288} w={318}>Pakuwon Cit</Label>
      <Label x={1362} y={383} w={62}>Vil</Label><Label x={1362} y={440} w={60}>Pa</Label>
      <text x="768" y="651" fontFamily="Roboto" fontSize="58" fontWeight="600" textLength="524" fill="#2b3136" stroke="#616163" strokeWidth="5" paintOrder="stroke">PAKUWON CITY</text>
      <Pin x={966} y={219} c="#2b3f63"><Bag /></Pin>
      <Pin x={908} y={421} /><Pin x={1308} y={371} />
    </g>
    <g transform="translate(760 580) scale(.33333)">
      <Label x={38} y={65} w={400} fill="#604442">U Haji Surabaya</Label>
      <Label x={105} y={147} w={455}>Telkom Indonesia</Label>
      <Label x={105} y={205} w={420}>Divisi Regional 5</Label>
      <Label x={497} y={70} w={230} s={35} r={7} fill="#37393c">Gg. Puskesmas</Label>
      <Label x={72} y={469} w={440}>Puncak Kertajaya</Label>
      <Label x={287} y={605} w={276} fill="#684638">Soto Ayam</Label>
      <Label x={287} y={663} w={486} fill="#684638">Lamongan Cak Har</Label>
      <Label x={42} y={646} w={46}>te</Label>
      <Label x={36} y={800} w={118} s={36} r={3} fill="#37393c">Delan ry</Label>
      <Label x={843} y={775} w={500} fill="#624144">RSGM Nala Husada</Label>
      <Label x={1055} y={547} w={542} fill="#333c48">Sakinah Supermarket</Label>
      <Label x={1360} y={605} w={235} fill="#333c48">Surabaya</Label>
      <Label x={1405} y={343} w={354} s={39} r={-10}>Jl. Teknik Perkapalan</Label>
      <Pin x={50} y={137} /><Pin x={566} y={430} />
      <Pin x={232} y={595} c="#70432c"><Fork /></Pin>
      <Pin x={1397} y={735} c="#6c2b30"><path d="M-17-24V24M17-24V24M-17 0H17" stroke="#8e7c7e" strokeWidth="9" /></Pin>
    </g>
    <g transform="translate(1230 580) scale(.33333)">
      <defs><path id="pompa" d="M1053 190Q1190 55 1445-68" /></defs>
      <text fontFamily="Roboto" fontSize="39" fill="#2b3136" stroke="#616163" strokeWidth="5" paintOrder="stroke"><textPath href="#pompa" textLength="464">Jl. Keputih Timur Pompa Air</textPath></text>
      <Label x={652} y={415} w={280} s={38} r={-80}>Jl. Keputih Timur</Label>
      <Label x={222} y={522} w={451}>Zmooth Surabaya</Label>
      <Label x={822} y={772} w={386} s={38} r={-88.500}>Jl. Keputih Tegal Tim. II</Label>
      <Label x={928} y={662} w={310}>Apartment D</Label><Label x={1384} y={662} w={60}>eg</Label>
      <Label x={1388} y={540} w={46} s={38}>Jl. J</Label>
      <Pin x={726} y={483} />
      <Pin x={90} y={666} c="#2b3f63"><path d="M-26-18h10l9 26h24l8-20H-12" fill="#85898f" stroke="#85898f" strokeWidth="4" /><circle cx="-5" cy="20" r="5" fill="#85898f" /><circle cx="14" cy="20" r="5" fill="#85898f" /></Pin>
    </g>

    <g fontFamily="Liberation Sans, Arial, sans-serif" fontSize="20" fill="#fff" fillOpacity=".48">
      {[523.5, 875.5].map((y) => [597.500, 950, 1302.500, 1654.500].map((x) => (
        <text key={`${x}-${y}`} x={x} y={y} textLength="287">For development purposes only</text>
      )))}
    </g>

    <g fontFamily="Lato, sans-serif" fontSize="29.500" fontWeight="600" stroke="#d8d8d8" strokeWidth="2.400" paintOrder="stroke" strokeLinejoin="round">
      <text x="780" y="866" textLength="87" lengthAdjust="spacingAndGlyphs">
        <tspan fill="#4285f4">G</tspan><tspan fill="#ea4335">o</tspan><tspan fill="#fbbc05">o</tspan><tspan fill="#4285f4">g</tspan><tspan fill="#34a853">l</tspan><tspan fill="#ea4335">e</tspan>
      </text>
    </g>
    <path d="M1239.300 583.500C1237 569 1232.500 563 1227 556.500C1223.500 552.500 1220.800 548.500 1220.800 543.500A18.500 18.500 0 011257.800 543.500C1257.800 548.500 1255 552.500 1251.500 556.500C1246 563 1241.500 569 1239.300 583.500z" fill="#ea4335" stroke="#f1e3e1" strokeWidth="1.200" />
    <circle cx="1239.300" cy="543" r="6.300" fill="#811411" />
  </svg>
);

/* ---------- data ---------- */

const tabs = [
  ['steps', 'The foundations', 1], ['peak', 'Learn from top p', 1], ['play', 'Become a Digita', 1], ['play', 'Become a Graph', 1],
  ['loop', 'Graphic Design', 0], ['emblem', 'Contact Us', 0], ['jax', 'The Jackson Lab', 1], ['drive', 'My Drive - Goog', 1],
];
const marks = [
  ['google', 'Google Chrome We...', 210, 30, -0.07], ['doc', 'Bookmarks', 135, 32, -0.35], ['folder', 'Wibu', 93, 34, -0.35], ['folder', 'Game', 100, 34, -0.45],
  ['gmail', 'Gmail', 96, 31, -0.35], ['sub', 'Subscene', 126, 33, -0.28], ['its', 'myITS', 98, 33, -0.45], ['kiss', 'KissAsian - Watch d...', 214, 34, -0.07],
  ['bird', 'Home / Twitter', 164, 32, -0.2], ['mat', 'Icons - Material De...', 190, 33, -0.07],
];
const nav = [['HOME', 130.500, 0.800], ['ABOUT', 145, 2.050], ['FACILITIES', 189.500, 2.200], ['RESEARCHES', 219.500, 2.500], ['CONTACT', 120.500, 1.950]];

const BlueDefs = ({ id }) => <defs><linearGradient id={id}><stop stopColor="#1d56be" /><stop offset="1" stopColor="#3f7cf0" /></linearGradient></defs>;
const MapIcon = () => (
  <svg width="54" height="56"><BlueDefs id="g1" />
    <g fill="url(#g1)">
      <path d="M0 9.500Q0 7 2.500 8L18.500 14V55.500L3 49.500Q0 48 0 45z" />
      <path d="M20.500 14L22 13.500C22 22 28 30 34.300 38V50L20.500 55.500z" />
      <path d="M36 50V38C43 30 48 24 49.500 14L52 14Q54 14.500 54 17V53Q54 56 51 55z" />
      <path fillRule="evenodd" d="M35.500 0a13.500 14 0 0113.500 14C49 23 41 30 35.500 37 30 30 22 23 22 14A13.500 14 0 0135.500 0zm0 9.500a4.300 4.500 0 100 9 4.300 4.500 0 000-9z" />
    </g>
  </svg>
);
const PhoneIcon = () => (
  <svg width="54" height="55"><BlueDefs id="g2" />
    <path fill="url(#g2)" d="M8 1.500C10 0 12 0 14 2L21 10C23 13 23.500 15 21.500 17L16.500 20.500C15 22 15.500 24 17 27C20 32 25 37 30 39C33 40.500 34.500 40 35.500 38L38 33C39.500 31 41.500 31 44 32.500L52 39.500C54 42 54.500 44 53 46.500L49 51C46 54 42 55 37 53.500C20 48 4 30 .5 15C0 11 1 8 3 6z" />
  </svg>
);
const MailIcon = () => (
  <svg width="55" height="39"><BlueDefs id="g3" />
    <g fill="url(#g3)"><path d="M2 2Q3 0 6 0H49Q52 0 53 2L53 4.500L32 23Q27.500 27 23 23L2 5z" /><path d="M0 7L18 22L0 36z" /><path d="M55 7L37 22L55 36z" /><path d="M3 38L20.500 23.500L22 25Q27.500 29 33 25L34.500 23.500L52 38Q51 39 49 39H6Q4 39 3 38z" /></g>
  </svg>
);

const s = { fill: 'none', stroke: '#222', strokeWidth: 1.6 };

export default function App() {
  return (
    <Screen>
      <GlobalStyle />
      <TabStrip>
        {tabs.map(([icon, title, line], i) => (
          <Tab key={i} $active={icon === 'emblem'} $line={line}>
            <TabIcon>{icon === 'emblem' ? <Emblem w={23} h={22} /> : Fav[icon]}</TabIcon>
            <TabTitle $active={icon === 'emblem'}>{title}</TabTitle>
            <TabClose><Close c={icon === 'emblem' ? '#111' : '#3a3a3a'} /></TabClose>
          </Tab>
        ))}
        <NewTab><svg width="18" height="18" {...s} stroke="#333"><path d="M9 0v18M0 9h18" /></svg></NewTab>
        <WindowButtons>
          <svg width="14" height="16" {...s} stroke="#111"><path d="M0 9h14" /></svg>
          <svg width="15" height="16" {...s} stroke="#111" strokeWidth="1.800"><path d="M1 4.500h9.500V15H1zM4 4V1.500h9.800V12H11" /></svg>
          <Close s={15} c="#111" w={1.100} />
        </WindowButtons>
      </TabStrip>

      <Toolbar>
        <NavButtons>
          <svg width="24" height="22" {...s}><path d="M12 1L2 11l10 10M2 11h22" /></svg>
          <svg width="24" height="22" {...s} stroke="#d0d0d0"><path d="M12 1l10 10-10 10M22 11H0" /></svg>
          <svg width="25" height="24" {...s}><path d="M8.500 3A10.500 10.500 0 1017 3M3.500 1.500h6v6.500" /></svg>
          <svg width="22" height="24" {...s}><path d="M2.500 10.500V22h5.500v-8h6v8h5.500V10.500M1 12L11 1.500 21 12" /></svg>
        </NavButtons>
        <AddressBar>
          <svg width="20" height="24" {...s} stroke="#6a6a6a"><path d="M2 10.500h16v11.500H2zM5 10.500V6.500a5 5 0 0110 0v4" /></svg>
          <Url>https://<b>neolarins.com</b>/contact</Url>
          <svg width="23" height="23" {...s} stroke="#6a6a6a" strokeWidth="1.300"><path d="M13.500 16.500L10.500 15 4.500 20 6.500 12.500 1 8.500 8 8 10.500 1.500 13 8l7 .5-4.500 4M18 14v8M14 18h8" /></svg>
        </AddressBar>
        <Extensions>
          <Slot $w={61}><Globe w={23} h={22} /></Slot>
          <Slot $w={61}><svg width="22" height="24"><defs><linearGradient id="ga" x2="0" y2="1"><stop stopColor="#9fd630" /><stop offset="1" stopColor="#5b9e12" /></linearGradient></defs><path d="M6 0h10v11h5L11 22 1 11h5z" fill="url(#ga)" /><path d="M2.500 0h2v9h-2zM17.500 0h2v9h-2z" fill="#8ac926" /><path d="M5 23h12" stroke="#ccc" /></svg></Slot>
          <Slot $w={60}><svg width="22" height="22" {...s} stroke="#6d6d6d"><path d="M7 15H5.500A4.500 4.500 0 015 6.200 6 6 0 0116.500 5 5 5 0 0116.500 15H15M11 8v12M7.500 16.500L11 20.200l3.500-3.700" /></svg></Slot>
          <Slot $w={50}><svg width="24" height="22"><defs><linearGradient id="gh" x2=".6" y2="1"><stop stopColor="#8a5be8" /><stop offset=".4" stopColor="#f0506e" /><stop offset="1" stopColor="#ff9a4d" /></linearGradient></defs><path d="M12 20.500L3 11C-1 5 5-1 10.500 3L12 5l1.500-2C19-1 25 5 21 11z" fill="none" stroke="url(#gh)" strokeWidth="1.800" /></svg></Slot>
          <Rule />
          <Slot $w={61}><svg width="22" height="22" {...s}><path d="M11.500 14.500L9.500 14.500 4 19.500 6 12.500 1 8h6.500L9.700 1.500 12 8h9M13 13h8M13 18h8" /></svg></Slot>
          <Slot $w={57}><svg width="22" height="23" {...s}><path d="M6.500 7h14v15h-14zM13.500 10.500v8M9.500 14.500h8M4 18L1 5.500 14.500 1.500 15.500 4.500" /></svg></Slot>
          <Slot $w={68}><svg width="32" height="32"><circle cx="16" cy="16" r="15.500" fill="#d0cecb" /><circle cx="16" cy="12.500" r="7.500" fill="#8f8a86" /><path d="M5 26.500c2-9 20-9 22 0a15.500 15.500 0 01-22 0z" fill="#8f8a86" /></svg></Slot>
          <Dots w={21} />
        </Extensions>
      </Toolbar>

      <Bookmarks>
        {marks.map(([icon, label, w, iw, ls]) => (
          <Bookmark key={label} $w={w} $ls={ls}><BookmarkIcon $w={iw}>{BI[icon]}</BookmarkIcon>{label}</Bookmark>
        ))}
      </Bookmarks>

      <Viewport>
        <Page>
          <SiteHeader>
            <Brand><Emblem w={63} h={60} /><BrandName>LARINS ITS</BrandName></Brand>
            <SiteNav>{nav.map(([t, w, ls]) => <NavLink key={t} $w={w} $ls={ls}>{t}</NavLink>)}</SiteNav>
          </SiteHeader>
          <Content>
            <Card>
              <InfoRow $h={248}>
                <InfoIcon $top={8}><MapIcon /></InfoIcon>
                <div>
                  <InfoTitle $ls={0.76}>Address</InfoTitle>
                  <InfoText>Fakultas Teknologi Industri dan</InfoText>
                  <InfoText $ls={0.12}>Rekayasa Sistem Gedung C dan E,</InfoText>
                  <InfoText>Kampus ITS, Sukolilo Surabaya –</InfoText>
                  <InfoText>60111</InfoText>
                </div>
              </InfoRow>
              <InfoRow $h={149}>
                <InfoIcon $top={8}><PhoneIcon /></InfoIcon>
                <div><InfoTitle $ls={0.03}>Make a Call</InfoTitle><InfoText $ls={0.08}>+6282333570238</InfoText></div>
              </InfoRow>
              <InfoRow $h={149} $last>
                <InfoIcon $top={17}><MailIcon /></InfoIcon>
                <div><InfoTitle $ls={0.25}>Send a Mail</InfoTitle><InfoText $ls={0.05}>neolarins@gmail.com</InfoText></div>
              </InfoRow>
            </Card>
            <MapBox>
              <MapArt />
              <MapControl $top={14}>
                <ControlCell><svg width="25" height="25" fill="none" stroke="#666" strokeWidth="3.400"><path d="M1.700 8.500V1.700H8.500M16.500 1.700h6.800V8.500M23.300 16.500v6.800h-6.800M8.500 23.300H1.700v-6.800" /></svg></ControlCell>
              </MapControl>
              <MapControl $top={442}>
                <ControlCell><svg width="25" height="25" stroke="#666" strokeWidth="5.500"><path d="M12.500 0v25M0 12.500h25" /></svg></ControlCell>
                <ControlLine />
                <ControlCell><svg width="25" height="25" stroke="#666" strokeWidth="5.500"><path d="M0 12.500h25" /></svg></ControlCell>
              </MapControl>
              <Attribution>
                <Credit $w={119}>Map data ©2020</Credit>
                <Credit $w={98}>Terms of Use</Credit>
                <Credit $w={132} $line>Report a map error</Credit>
              </Attribution>
            </MapBox>
          </Content>
        </Page>
        <Scrollbar>
          <svg width="10" height="6" fill="#505050"><path d="M0 6l5-6 5 6z" /></svg>
          <Thumb />
          <svg width="10" height="6" fill="#505050"><path d="M0 0l5 6 5-6z" /></svg>
        </Scrollbar>
      </Viewport>

      <Shelf>
        <Download>
          <svg width="18" height="22"><path d="M1 .7h11l5 5V21.300H1z" fill="#fff" stroke="#8a8a8a" strokeWidth="1.300" /><path d="M12 .7v5h5" fill="none" stroke="#8a8a8a" /><rect x="4.500" y="8.500" width="9" height="8" fill="#1769c4" /><path d="M4.500 16.500l4-4 2 1.500 3-2v4.500z" fill="#0a3a74" /><path d="M4.500 8.500h4v4h-4z" fill="#38a4ea" /></svg>
          <FileText>instagram.png<a>Open file</a></FileText>
          <Dots w={20} />
        </Download>
        <ShowAll>Show all</ShowAll>
        <Close s={14} c="#333" w={1.300} />
      </Shelf>

      <Taskbar>
        <TaskButton $w={57}><svg width="23" height="24" fill="#fff"><path d="M0 3.500l9.500-1.300V11.500H0zM10.500 2L23 0v11.500H10.500zM0 12.500h9.500v9.300L0 20.500zM10.500 12.500H23V24l-12.500-2z" /></svg></TaskButton>
        <TaskButton $w={75}><svg width="24" height="24" fill="none" stroke="#fff" strokeWidth="1.700"><path d="M1.500 6.500h14v10h-14zM1.500 0v3.500h14V0M1.500 23v-3.500h14V23M20.500 0v6M20.500 12v11" /><path d="M18.500 8.500h4" strokeWidth="4" /></svg></TaskButton>
        <TaskButton $w={67.5} $open><svg width="31" height="27"><path d="M0 1h12l2 3h15v22H0z" fill="#fbd05c" /><path d="M0 1h12l2 4H0z" fill="#d9930a" /><path d="M5 27V15q0-2 2-2h16q2 0 2 2v12h-6v-7h-8v7z" fill="#3f9ae0" /></svg></TaskButton>
        <TaskButton $w={66.5} $open $hot={0.24}>
          <svg width="33" height="33"><defs><linearGradient id="e1" x2="1" y2=".4"><stop stopColor="#2aa6e6" /><stop offset=".6" stopColor="#33c3b3" /><stop offset="1" stopColor="#60d650" /></linearGradient></defs>
            <circle cx="16.500" cy="16.500" r="16" fill="#1373cc" /><path d="M1 14C3-3 29-5 32.500 14c.5 7-6 9-12 7 1-1 2-3 1-5C18 9 6 8 1 14z" fill="url(#e1)" /><path d="M12 16c-2 7 4 14 12 11l4-1C23 33 14 34 10 29c-4-4-3-11 2-13z" fill="#0f4f9f" /><path d="M20 21c-3-1-4 0-5 0 0 5 7 8 14 4l3-4c-3 2-8 2-12 0z" fill="#444e53" /></svg>
        </TaskButton>
        <TaskButton $w={67.7} $open><svg width="31" height="31"><circle cx="15.500" cy="15.500" r="15.500" fill="#1ed760" /><g fill="none" stroke="#06150c" strokeLinecap="round"><path d="M6.500 10.500c6-2 13-1.500 18.500 1.500" strokeWidth="3" /><path d="M7.500 15.700c5-1.500 11-1 15.500 1.500" strokeWidth="2.500" /><path d="M8.500 20.500c4-1 9-.8 13 1.500" strokeWidth="2.100" /></g></svg></TaskButton>
        <TaskButton $w={67.5} $open><svg width="34" height="33"><rect width="34" height="33" rx="6" fill="#00b900" /><path d="M17 5C9 5 4.500 9.500 4.500 14.500S10 23 15.500 24c1 .3 0 4 .8 4.200S29.500 21 29.500 14.500 25 5 17 5z" fill="#fff" /><text x="17" y="17.500" textAnchor="middle" textLength="18" lengthAdjust="spacingAndGlyphs" fontFamily="Open Sans" fontWeight="800" fontSize="7.500" fill="#00b900">LINE</text></svg></TaskButton>
        <TaskButton $w={67.5} $open><Globe w={33} h={30} /></TaskButton>
        <TaskButton $w={67.5} $open="two"><svg width="33" height="29"><rect x="8" width="25" height="29" rx="1.500" fill="#2b7cd3" /><path d="M8 0h25v7.500H8z" fill="#41a5ee" /><path d="M8 14.500h25v7H8z" fill="#185abd" /><path d="M8 21.500h25V29H8z" fill="#103f91" /><rect y="7" width="16" height="15" rx="1" fill="#1b5cbe" /><text x="8" y="19.500" textAnchor="middle" fontFamily="Open Sans" fontWeight="700" fontSize="13" fill="#fff">W</text></svg></TaskButton>
        <TaskButton $w={67.5} $open><svg width="29" height="28"><rect x="1" y="1" width="27" height="26" fill="#2a1200" stroke="#ee7a0c" strokeWidth="2" /><text x="14.500" y="19.500" textAnchor="middle" fontFamily="Open Sans" fontWeight="700" fontSize="16" fill="#f5850f">Ai</text></svg></TaskButton>
        <TaskButton $w={66} $open $hot={0.12}><svg width="33" height="33"><rect width="33" height="33" rx="6" fill="#470137" /><text x="16.500" y="23" textAnchor="middle" fontFamily="Open Sans" fontWeight="700" fontSize="18.500" fill="#ff61f6">Xd</text></svg></TaskButton>
        <Tray>
          <TrayIcon $w={32}><svg width="17" height="10" fill="none" stroke="#eee" strokeWidth="1.700"><path d="M1 9l7.500-7.500L16 9" /></svg></TrayIcon>
          <TrayIcon $w={36}><svg width="21" height="14" fill="none" stroke="#eee" strokeWidth="1.600"><path d="M1 1.500h17.500v11H1z" /><path d="M19 5h1.500v4H19z" /><path d="M3 4h3.500v6H3z" fill="#eee" /></svg></TrayIcon>
          <TrayIcon $w={28}><svg width="18" height="19" fill="none" strokeWidth="1.500"><path d="M1 18A17 17 0 0117.500 1.500M5 18A13 13 0 0117.500 5.500" stroke="#8d9598" /><path d="M9 18a9 9 0 018.500-8.500" stroke="#ddd" /><circle cx="15" cy="16" r="2.200" fill="#eee" /></svg></TrayIcon>
          <TrayIcon $w={39}><svg width="24" height="20" fill="none" stroke="#eee" strokeWidth="1.500"><path d="M1 7h3.500L9 2v16l-4.500-5H1zM12 7q2 3 0 6" /><path d="M15 4.500q4 5.500 0 11M18.500 1.500q6 8.500 0 17" stroke="#6d777b" /></svg></TrayIcon>
          <TrayIcon $w={39}><svg width="24" height="23" fill="none" stroke="#eee" strokeWidth="1.600"><path d="M6.500 13C2 12 0 19 2.500 21s5 0 6-3" /><path d="M9 18c-1-6 1-9 4-13 2-3 5-4 5-2 0 4-4 12-9 15zM13 19c2-4 5-11 9-9 2 1-1 5-4 3" /></svg></TrayIcon>
          <TrayIcon $w={47}><svg width="33" height="19" fill="none" stroke="#eee" strokeWidth="1.700"><rect x="1" y="1" width="30.500" height="17" rx="1" /><path d="M5 5.500h23M5 9.500h23" strokeDasharray="2 1.500" /><path d="M5 13.700h3M10 13.700h13M25 13.700h3" /></svg></TrayIcon>
          ENG
          <Clock>10:25<br />7/15/2020</Clock>
          <svg width="34" height="36" viewBox="0 0 34 36"><path d="M0 5h23v18H13l-5 5v-5H0z" fill="#fff" /><path d="M4 9.500h15M4 13.500h15M4 17.500h9" stroke="#111" strokeWidth="1.500" /><circle cx="22" cy="26" r="11" fill="#2a2e31" stroke="#74797c" strokeWidth="1.500" /><text x="22" y="31.500" textAnchor="middle" fontFamily="Open Sans" fontWeight="600" fontSize="15.500" fill="#fff">1</text></svg>
          <ShowDesktop />
        </Tray>
        <Tip>website larins - Adobe XD</Tip>
      </Taskbar>
    </Screen>
  );
}
